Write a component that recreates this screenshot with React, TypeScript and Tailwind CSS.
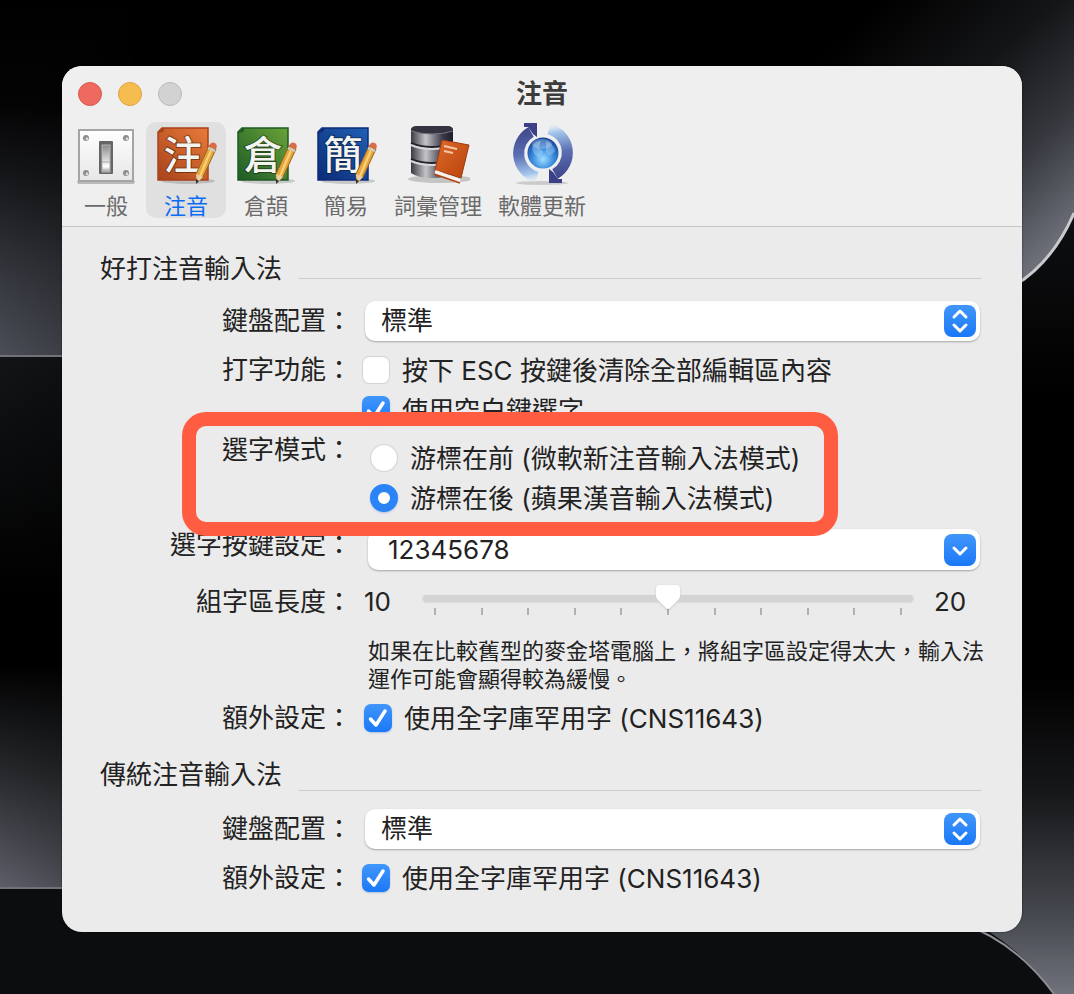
import { useState } from 'react';
import type { ReactNode } from 'react';

const Wallpaper = () => (
  <svg
    className="absolute inset-0 w-full h-full"
    viewBox="0 0 1074 994"
    preserveAspectRatio="none"
    aria-hidden="true"
  >
    <defs>
      <linearGradient id="leftTop" x1="0" y1="0" x2="0" y2="1">
        <stop offset="0" stopColor="#000" />
        <stop offset="0.3" stopColor="#040405" />
        <stop offset="0.5" stopColor="#16171a" />
        <stop offset="0.8" stopColor="#373a40" />
        <stop offset="1" stopColor="#4b4e57" />
      </linearGradient>
      <linearGradient id="leftBottom" x1="0" y1="0" x2="0" y2="1">
        <stop offset="0" stopColor="#121416" />
        <stop offset="0.45" stopColor="#000" />
        <stop offset="0.58" stopColor="#000" />
        <stop offset="0.78" stopColor="#26282b" />
        <stop offset="1" stopColor="#5d5e68" />
      </linearGradient>
      <linearGradient id="edgeShade" x1="0" y1="0" x2="1" y2="0">
        <stop offset="0" stopColor="#000" stopOpacity="0" />
        <stop offset="1" stopColor="#000" stopOpacity="0.4" />
      </linearGradient>
      <linearGradient id="rightTop" gradientUnits="userSpaceOnUse" x1="860" y1="20" x2="1060" y2="240">
        <stop offset="0" stopColor="#000" />
        <stop offset="0.4" stopColor="#141517" />
        <stop offset="0.7" stopColor="#35373d" />
        <stop offset="1" stopColor="#6c6f78" />
      </linearGradient>
      <linearGradient id="rightBottom" x1="0" y1="0" x2="0" y2="1">
        <stop offset="0" stopColor="#101113" />
        <stop offset="0.25" stopColor="#000" />
        <stop offset="0.6" stopColor="#000" />
        <stop offset="0.75" stopColor="#17181a" />
        <stop offset="0.9" stopColor="#46484f" />
        <stop offset="1" stopColor="#70727c" />
      </linearGradient>
    </defs>
    <rect width="1074" height="994" fill="#000" />
    <rect width="130" height="356" fill="url(#leftTop)" />
    <rect y="356" width="130" height="532" fill="url(#leftBottom)" />
    <rect width="130" height="994" fill="url(#edgeShade)" />
    <path d="M0 356H130M0 888H130" stroke="#70727a" strokeWidth="2" />
    <rect x="900" y="200" width="174" height="794" fill="url(#rightBottom)" />
    <path d="M800 0H1074V213Q1050 266 1016 286L960 300H800Z" fill="url(#rightTop)" />
    <path d="M1074 213Q1052 264 1012 287" fill="none" stroke="#c9cacd" strokeWidth="3" />
    <path d="M0 889H880Q1000 915 1054 994H0Z" fill="#0c0d0f" />
    <path d="M960 923Q1014 940 1054 994" fill="none" stroke="#8d8f96" strokeWidth="2" />
  </svg>
);

const SwitchIcon = () => (
  <svg className="w-16 h-16" viewBox="0 0 64 64" aria-hidden="true">
    <defs>
      <linearGradient id="plate" x1="0" y1="0" x2="0" y2="1">
        <stop offset="0" stopColor="#fff" />
        <stop offset="1" stopColor="#e6e6e6" />
      </linearGradient>
      <linearGradient id="lever" x1="0" y1="0" x2="0" y2="1">
        <stop offset="0" stopColor="#8a8a8a" />
        <stop offset="0.55" stopColor="#d8d8d8" />
        <stop offset="0.8" stopColor="#fff" />
        <stop offset="1" stopColor="#999" />
      </linearGradient>
    </defs>
    <path d="M3 58H61L60 61H4Z" fill="#b9b9b9" />
    <rect x="5" y="7" width="54" height="51" fill="url(#plate)" stroke="#a5a5a5" strokeWidth="2" />
    {[15, 50].map((y) =>
      [12, 52].map((x) => (
        <g key={`${x}-${y}`}>
          <circle cx={x} cy={y} r="3" fill="#8d8d8d" />
          <circle cx={x + 1} cy={y + 1} r="1.4" fill="#dcdcdc" />
        </g>
      ))
    )}
    <rect x="25" y="18" width="14" height="33" rx="1" fill="#666" />
    <rect x="28" y="22" width="8" height="27" fill="url(#lever)" stroke="#b5b5b5" />
    <path d="M28 39H36" stroke="#aaa" />
  </svg>
);

const BookIcon = ({ glyph, dark, light, id }: { glyph: string; dark: string; light: string; id: string }) => (
  <svg className="w-16 h-16" viewBox="0 0 64 64" aria-hidden="true">
    <defs>
      <linearGradient id={id} x1="0" y1="1" x2="1" y2="0">
        <stop offset="0" stopColor={dark} />
        <stop offset="1" stopColor={light} />
      </linearGradient>
    </defs>
    <ellipse cx="34" cy="58" rx="27" ry="3" fill="#000" opacity="0.16" />
    <path d="M8 5H54V57H4V9Z" fill={`url(#${id})`} stroke={dark} strokeWidth="1.5" />
    <path d="M4 10L9 5H11L9 9Z" fill={dark} />
    <text
      x="29"
      y="46"
      textAnchor="middle"
      fontSize="39"
      fontWeight="500"
      fill="#f3f3f0"
      stroke="#000"
      strokeOpacity="0.4"
      strokeWidth="2"
      paintOrder="stroke"
      className="font-['Noto_Sans_CJK_TC',sans-serif]"
    >
      {glyph}
    </text>
    <path d="M55 23L62 26L49 54L43 60L42 51Z" fill="#e6a63c" stroke="#9a6420" />
    <path d="M58 25L46 53" stroke="#f8d27a" strokeWidth="2" />
    <path d="M55 23Q57 18 61 20Q64 22 62 26Z" fill="#dc6a4c" />
    <path d="M54 25L61 28" stroke="#c9c9c9" strokeWidth="2" />
    <path d="M42 51L49 54L43 60Z" fill="#e8cfa4" />
    <path d="M42 56L45 58L42 61Z" fill="#333" />
  </svg>
);

const PhraseIcon = () => (
  <svg className="w-16 h-16" viewBox="0 0 64 64" aria-hidden="true">
    <defs>
      <linearGradient id="disk" x1="0" y1="0" x2="1" y2="0">
        <stop offset="0" stopColor="#3a3a40" />
        <stop offset="0.35" stopColor="#c4c4c8" />
        <stop offset="0.75" stopColor="#3b3a49" />
        <stop offset="1" stopColor="#1d1c2b" />
      </linearGradient>
      <linearGradient id="dictionary" x1="0" y1="0" x2="1" y2="1">
        <stop offset="0" stopColor="#df6a2a" />
        <stop offset="1" stopColor="#b8430e" />
      </linearGradient>
    </defs>
    <ellipse cx="34" cy="56" rx="32" ry="4" fill="#000" opacity="0.18" />
    <path d="M5 7Q5 3 12 3H40Q47 3 47 7V50Q40 55 26 55T5 50Z" fill="url(#disk)" />
    <path d="M5 7Q5 3 12 3H40Q47 3 47 7Q38 11 26 11T5 7Z" fill="#34333f" />
    <path d="M5 8Q14 11 26 11T47 8" fill="none" stroke="#77767f" />
    <path d="M5 20Q14 24 26 24T47 20M5 36Q14 40 26 40T47 36" fill="none" stroke="#26252f" strokeWidth="2" />
    <path d="M5 22Q14 26 26 26T47 22M5 38Q14 42 26 42T47 38" fill="none" stroke="#d8d8dc" strokeWidth="2" />
    <path d="M36 17L63 22L55 55L29 47Z" fill="url(#dictionary)" stroke="#9b3a10" />
    <path d="M29 49L54 58" stroke="#f6f1ea" strokeWidth="4" />
    <path d="M28 51L54 60" stroke="#b3410f" strokeWidth="1.5" />
    <path d="M38 23L51 26M38 28L47 30" stroke="#f6c7a6" strokeWidth="2" />
  </svg>
);

const UpdateIcon = () => (
  <svg className="w-16 h-16" viewBox="0 0 64 64" aria-hidden="true">
    <defs>
      <radialGradient id="globe" cx="0.5" cy="0.7" r="0.65">
        <stop offset="0" stopColor="#9fe0ff" />
        <stop offset="0.5" stopColor="#3f8fe0" />
        <stop offset="1" stopColor="#174a9f" />
      </radialGradient>
      <linearGradient id="arrow" gradientUnits="userSpaceOnUse" x1="18" y1="2" x2="28" y2="58">
        <stop offset="0" stopColor="#3c4187" />
        <stop offset="0.5" stopColor="#5b6fb2" />
        <stop offset="0.85" stopColor="#a4c6ec" />
        <stop offset="1" stopColor="#d5e8f8" stopOpacity="0.2" />
      </linearGradient>
    </defs>
    <ellipse cx="32" cy="60" rx="26" ry="2" fill="#000" opacity="0.15" />
    {['', 'rotate(180 33 30)'].map((transform) => (
      <g key={transform} transform={transform}>
        <path d="M27 54A24.500 24.500 0 0 1 21 9" fill="none" stroke="url(#arrow)" strokeWidth="11" />
        <path d="M14 0H27V14L23 11L18 4H14Z" fill="#3c4187" />
      </g>
    ))}
    <circle cx="33" cy="30" r="15.500" fill="url(#globe)" />
    <path d="M22 25Q24 18 31 18L29 24L33 29L29 35L24 31ZM36 18Q44 21 45 28L40 33L36 29Z" fill="#b5dcfa" opacity="0.4" />
    <ellipse cx="32" cy="21" rx="10" ry="5" fill="#fff" opacity="0.25" />
  </svg>
);

const tabs: { name: string; width: string; icon: ReactNode }[] = [
  { name: '一般', width: 'w-20', icon: <SwitchIcon /> },
  { name: '注音', width: 'w-20', icon: <BookIcon id="bpmf" glyph="注" dark="#a8431a" light="#e87a3a" /> },
  { name: '倉頡', width: 'w-20', icon: <BookIcon id="cangjie" glyph="倉" dark="#1d5a26" light="#6aa338" /> },
  { name: '簡易', width: 'w-20', icon: <BookIcon id="simplex" glyph="簡" dark="#0c2c78" light="#1f5fb4" /> },
  { name: '詞彙管理', width: 'w-26', icon: <PhraseIcon /> },
  { name: '軟體更新', width: 'w-26', icon: <UpdateIcon /> },
];

const Section = ({ title, lineClass, children }: { title: string; lineClass: string; children: ReactNode }) => (
  <section>
    <div className="flex items-end pl-[38px] pr-[40px]">
      <h2 className="leading-8">{title}</h2>
      <div className={`flex-1 ml-4 h-px bg-[#cfcfcf] ${lineClass}`} />
    </div>
    {children}
  </section>
);

const Row = ({ label, htmlFor, className, children }: { label: string; htmlFor?: string; className: string; children: ReactNode }) => (
  <div className={`relative flex items-start pr-[42px] ${className}`}>
    {htmlFor ? (
      <label htmlFor={htmlFor} className="w-[290px] shrink-0 text-right">{label}</label>
    ) : (
      <span className="w-[290px] shrink-0 text-right">{label}</span>
    )}
    {children}
  </div>
);

const PopUp = ({ id }: { id: string }) => (
  <div className="relative flex-1 ml-[13px]">
    <select
      id={id}
      className="block w-full h-10 pl-4 pr-12 pb-px appearance-none rounded-[10px] bg-white leading-8 shadow-[0_1px_2px_rgba(0,0,0,0.3)] outline-none"
    >
      <option>標準</option>
      <option>倚天</option>
      <option>許氏</option>
    </select>
    <svg
      className="absolute right-1 top-1 w-8 h-8 rounded-lg bg-linear-to-b from-[#4096fb] to-[#1a78f6] pointer-events-none"
      viewBox="0 0 32 32"
      aria-hidden="true"
    >
      <path d="M10 12L16 6L22 12M10 20L16 26L22 20" fill="none" stroke="#fff" strokeWidth="3" strokeLinecap="round" strokeLinejoin="round" />
    </svg>
  </div>
);

const CheckBox = ({ text, initial }: { text: string; initial: boolean }) => {
  const [checked, setChecked] = useState(initial);

  return (
    <label className="flex items-center gap-3 h-7 whitespace-nowrap">
      <span className="grid shrink-0">
        <input
          type="checkbox"
          checked={checked}
          onChange={(e) => setChecked(e.target.checked)}
          className="col-start-1 row-start-1 w-7 h-7 appearance-none rounded-[7px] bg-white shadow-[inset_0_0_1px_1px_rgba(0,0,0,0.18)] checked:bg-linear-to-b checked:from-[#4096fb] checked:to-[#1a78f6] checked:shadow-[0_1px_2px_rgba(0,80,200,0.25)]"
        />
        {checked && (
          <svg className="col-start-1 row-start-1 w-7 h-7 pointer-events-none" viewBox="0 0 28 28" aria-hidden="true">
            <path d="M6.500 15L12 21L21 7" fill="none" stroke="#fff" strokeWidth="3.500" strokeLinecap="round" strokeLinejoin="round" />
          </svg>
        )}
      </span>
      <span className="pt-0.5">{text}</span>
    </label>
  );
};

const Radio = ({ text, defaultChecked }: { text: string; defaultChecked?: boolean }) => (
  <label className="flex items-center gap-3 h-7 whitespace-nowrap">
    <input
      type="radio"
      name="candidate-mode"
      defaultChecked={defaultChecked}
      className="w-7 h-7 shrink-0 appearance-none rounded-full bg-white shadow-[inset_0_0_1px_1px_rgba(0,0,0,0.18)] checked:border-8 checked:border-[#2a84f8] checked:shadow-[0_1px_2px_rgba(0,80,200,0.25)]"
    />
    <span className="pt-0.5">{text}</span>
  </label>
);

const App = () => {
  const [activeTab, setActiveTab] = useState('注音');

  return (
    <div className="relative min-h-screen bg-black pt-[66px] pb-[62px] pl-[62px] pr-[52px] font-['Inter','Noto_Sans_CJK_TC',sans-serif] text-[26px] leading-7 text-[#222]">
      <Wallpaper />
      <main className="relative rounded-[20px] overflow-hidden bg-[#ebebeb] shadow-[0_0_2px_rgba(0,0,0,0.6)]">
        <header className="bg-[#efefef] border-b border-[#c6c6c6] pb-2">
          {/* Title bar */}
          <div className="grid grid-cols-[1fr_auto_1fr] items-center h-14 px-4">
            <div className="flex gap-4">
              <button aria-label="關閉" className="w-6 h-6 rounded-full bg-[#ee6a5f] border border-[#d5594f]" />
              <button aria-label="縮到最小" className="w-6 h-6 rounded-full bg-[#f5bd4f] border border-[#dca43c]" />
              <button aria-label="縮放" className="w-6 h-6 rounded-full bg-[#d2d2d2] border border-[#bababa]" />
            </div>
            <h1 className="font-bold text-[#3c3c3c]">注音</h1>
          </div>

          {/* Toolbar */}
          <nav className="flex px-1">
            {tabs.map((tab) => (
              <button
                key={tab.name}
                onClick={() => setActiveTab(tab.name)}
                className={`flex flex-col items-center justify-between h-24 pt-px rounded-[10px] text-[22px] leading-6 whitespace-nowrap cursor-pointer ${tab.width} ${
                  activeTab === tab.name ? 'bg-[#e0e0e0] text-[#0a6cf5]' : 'text-[#6a6a6a]'
                }`}
              >
                {tab.icon}
                <span>{tab.name}</span>
              </button>
            ))}
          </nav>
        </header>

        <div className="pt-[26px] pb-10">
          <Section title="好打注音輸入法" lineClass="mb-1.5">
            <Row label="鍵盤配置：" htmlFor="layout-smart" className="mt-4 leading-10">
              <PopUp id="layout-smart" />
            </Row>
            <Row label="打字功能：" className="mt-[15px]">
              <div className="ml-[10px] flex flex-col gap-3">
                <CheckBox text="按下 ESC 按鍵後清除全部編輯區內容" initial={false} />
                <CheckBox text="使用空白鍵選字" initial={true} />
              </div>
            </Row>
            <Row label="選字模式：" className="mt-3 z-10">
              <div role="radiogroup" aria-label="選字模式" className="ml-[18px] pt-2 flex flex-col gap-3">
                <Radio text="游標在前 (微軟新注音輸入法模式)" />
                <Radio text="游標在後 (蘋果漢音輸入法模式)" defaultChecked />
              </div>
              <div className="absolute -top-6 -bottom-6 left-[120px] right-[184px] rounded-3xl border-14 border-[#ff5c42] pointer-events-none" />
            </Row>
            <Row label="選字按鍵設定：" htmlFor="candidate-keys" className="mt-[17px] leading-8">
              <div className="flex-1 ml-4 flex items-center h-[41px] pl-5 pr-1 rounded-[10px] bg-white shadow-[0_1px_2px_rgba(0,0,0,0.3)]">
                <input id="candidate-keys" type="text" defaultValue="12345678" className="flex-1 min-w-0 bg-transparent outline-none" />
                <button aria-label="顯示選項" className="w-8 h-8 rounded-lg bg-linear-to-b from-[#4096fb] to-[#1a78f6]">
                  <svg className="w-8 h-8" viewBox="0 0 32 32" aria-hidden="true">
                    <path d="M10 14L16 20L22 14" fill="none" stroke="#fff" strokeWidth="3" strokeLinecap="round" strokeLinejoin="round" />
                  </svg>
                </button>
              </div>
            </Row>
            <Row label="組字區長度：" htmlFor="buffer-size" className="mt-4 leading-8">
              <span className="ml-3 w-[59px]">10</span>
              <div className="flex-1">
                <input
                  id="buffer-size"
                  type="range"
                  min="10"
                  max="20"
                  defaultValue="15"
                  className="relative block w-full h-6 appearance-none bg-transparent drop-shadow-[0_1px_1px_rgba(0,0,0,0.15)] [&::-webkit-slider-runnable-track]:h-1.5 [&::-webkit-slider-runnable-track]:rounded-full [&::-webkit-slider-runnable-track]:bg-[#d4d4d4] [&::-webkit-slider-thumb]:appearance-none [&::-webkit-slider-thumb]:-mt-2.5 [&::-webkit-slider-thumb]:w-6 [&::-webkit-slider-thumb]:h-6 [&::-webkit-slider-thumb]:bg-white [&::-webkit-slider-thumb]:[clip-path:path('M4_0H20Q24_0_24_4V11Q24_13_22_15L14_23Q12_25_10_23L2_15Q0_13_0_11V4Q0_0_4_0Z')]"
                />
                <div className="flex justify-between px-[11px] -mt-0.5">
                  {Array.from({ length: 11 }, (_, i) => (
                    <div key={i} className="w-0.5 h-[7px] bg-[#b0b0b0]" />
                  ))}
                </div>
              </div>
              <span className="ml-[21px] w-[46px]">20</span>
            </Row>
            <p className="mt-[19px] ml-[306px] mr-[34px] text-[22px]">
              如果在比較舊型的麥金塔電腦上，將組字區設定得太大，輸入法運作可能會顯得較為緩慢。
            </p>
            <Row label="額外設定：" className="mt-[11px]">
              <div className="ml-3">
                <CheckBox text="使用全字庫罕用字 (CNS11643)" initial={true} />
              </div>
            </Row>
          </Section>

          <div className="h-[27px]" />

          <Section title="傳統注音輸入法" lineClass="mb-0">
            <Row label="鍵盤配置：" htmlFor="layout-plain" className="mt-[18px] leading-10">
              <PopUp id="layout-plain" />
            </Row>
            <Row label="額外設定：" className="mt-[15px]">
              <div className="ml-[10px]">
                <CheckBox text="使用全字庫罕用字 (CNS11643)" initial={true} />
              </div>
            </Row>
          </Section>
        </div>
      </main>
    </div>
  );
};

export default App;
